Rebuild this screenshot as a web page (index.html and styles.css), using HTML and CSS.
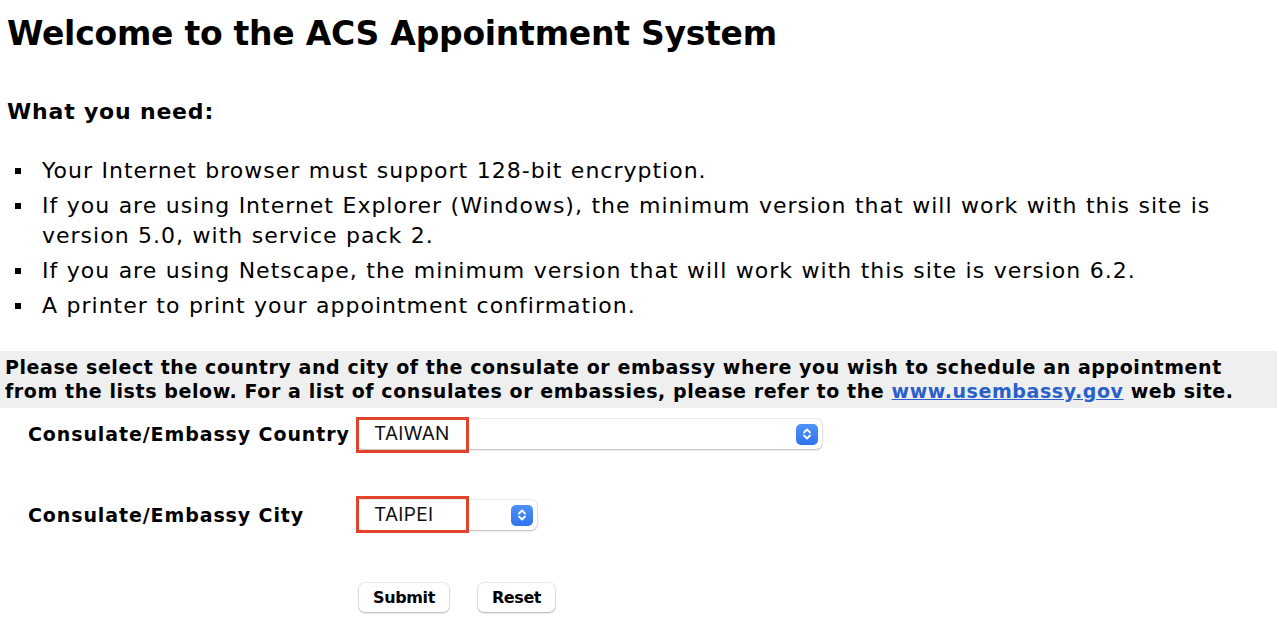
FILE: index.html
```html
<!DOCTYPE html>
<html lang="en">
<head>
<meta charset="utf-8">
<title>ACS Appointment System</title>
<link rel="stylesheet" href="styles.css">
</head>
<body>
  <h1 class="title">Welcome to the ACS Appointment System</h1>
  <h2 class="subtitle">What you need:</h2>
  <ul class="needs">
    <li>Your Internet browser must support 128-bit encryption.</li>
    <li>If you are using Internet Explorer (Windows), the minimum version that will work with this site is version 5.0, with service pack 2.</li>
    <li>If you are using Netscape, the minimum version that will work with this site is version 6.2.</li>
    <li>A printer to print your appointment confirmation.</li>
  </ul>
  <p class="notice">Please select the country and city of the consulate or embassy where you wish to schedule an appointment from the lists below. For a list of consulates or embassies, please refer to the <a href="#" class="link">www.usembassy.gov</a> web site.</p>
  <form class="form">
    <div class="label">Consulate/Embassy Country</div>
    <div class="field">
      <div class="select wide">
        <span class="value">TAIWAN</span>
        <span class="stepper"><svg width="10" height="14" viewBox="0 0 10 14"><path d="M2 5.5 L5 2.5 L8 5.5 M2 8.5 L5 11.5 L8 8.5" fill="none" stroke="#fff" stroke-width="1.8" stroke-linecap="round" stroke-linejoin="round"/></svg></span>
        <span class="mark mark-country"></span>
      </div>
    </div>
    <div class="label">Consulate/Embassy City</div>
    <div class="field">
      <div class="select narrow">
        <span class="value">TAIPEI</span>
        <span class="stepper"><svg width="10" height="14" viewBox="0 0 10 14"><path d="M2 5.5 L5 2.5 L8 5.5 M2 8.5 L5 11.5 L8 8.5" fill="none" stroke="#fff" stroke-width="1.8" stroke-linecap="round" stroke-linejoin="round"/></svg></span>
        <span class="mark mark-city"></span>
      </div>
    </div>
    <div class="buttons">
      <button type="button" class="btn submit">Submit</button>
      <button type="button" class="btn reset">Reset</button>
    </div>
  </form>
</body>
</html>
```
FILE: styles.css
```css
html, body {
  margin: 0;
  padding: 0;
  background: #fff;
  color: #000;
}
body {
  font-family: "DejaVu Sans", Verdana, sans-serif;
  width: 1279px;
  height: 623px;
  overflow: hidden;
}
.title {
  margin: 0;
  padding: 14px 0 0 7px;
  font-size: 33px;
  line-height: 40px;
  font-weight: bold;
  letter-spacing: -0.25px;
}
.subtitle {
  margin: 0;
  padding: 43px 0 0 7px;
  font-size: 22px;
  line-height: 30px;
  font-weight: bold;
  letter-spacing: 0.8px;
}
.needs {
  margin: 29px 0 0 0;
  padding: 0 30px 0 0;
  list-style: none;
  font-size: 22px;
  line-height: 30px;
  letter-spacing: 1px;
  word-spacing: 0.5px;
}
.needs li {
  display: grid;
  grid-template-columns: 42px 1fr;
  margin-bottom: 5px;
}
.needs li::before {
  content: "";
  width: 6px;
  height: 6px;
  margin: 12px 0 0 15px;
  background: #000;
}
.notice {
  margin: 30px 0 0 0;
  width: 1277px;
  box-sizing: border-box;
  padding: 4px 30px 5px 5px;
  background: #efefef;
  font-size: 19px;
  line-height: 24px;
  font-weight: bold;
  letter-spacing: 0.58px;
}
.link {
  color: #2a5fcc;
  text-decoration: underline;
}
.form {
  display: grid;
  grid-template-columns: 329px auto;
  grid-template-rows: 81px 83px auto;
  padding: 11px 0 0 28px;
  align-items: start;
}
.label {
  font-size: 19px;
  font-weight: bold;
  letter-spacing: 0.9px;
  line-height: 24px;
  padding-top: 3px;
}
.select {
  position: relative;
  height: 30px;
  box-sizing: border-box;
  background: #fff;
  border-radius: 6px;
  box-shadow: 0 0 0 1px rgba(0,0,0,0.07), 0 1px 2px rgba(0,0,0,0.22);
  display: flex;
  align-items: center;
  justify-content: space-between;
  padding: 0 4px 0 17px;
  font-family: Inter, "Liberation Sans", sans-serif;
  font-size: 19px;
  letter-spacing: 0.3px;
  color: #111;
}
.select.wide { width: 465px; }
.select.narrow { width: 180px; }
.value { line-height: 30px; }
.stepper {
  width: 22px;
  height: 21px;
  border-radius: 5px;
  background: linear-gradient(#4f93fa, #2f73ee);
  display: flex;
  align-items: center;
  justify-content: center;
}
.mark {
  position: absolute;
  left: -1px;
  width: 113px;
  box-sizing: border-box;
  border: 3px solid #e2432a;
}
.mark-country { top: -2px; height: 36px; }
.mark-city { top: -4px; height: 37px; }
.buttons {
  grid-column: 2;
  display: flex;
  gap: 29px;
  padding: 0 0 0 2px;
}
.btn {
  height: 29px;
  border: none;
  border-radius: 6px;
  background: #fff;
  box-shadow: 0 0 0 1px rgba(0,0,0,0.08), 0 1px 2px rgba(0,0,0,0.25);
  font-family: "DejaVu Sans", Verdana, sans-serif;
  font-weight: bold;
  font-size: 16px;
  letter-spacing: -0.4px;
  color: #000;
  padding: 0;
}
.submit { width: 90px; }
.reset { width: 77px; }
```
